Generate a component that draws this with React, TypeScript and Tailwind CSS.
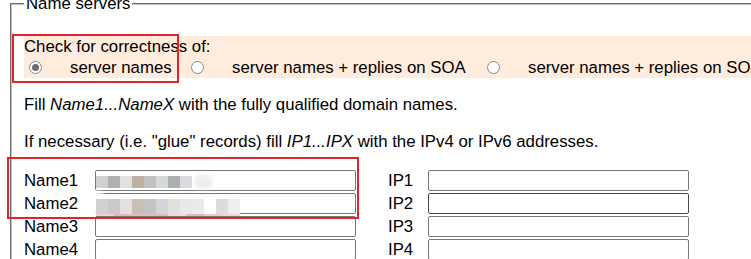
import React from "react";

const row1 = ["#d3d1cf", "#b2afb4", "#e2e1df", "#bcb1a3", "#c2c1bf", "#d6d9da", "#a9b1ae", "#dddbe0"];
const row2 = ["#d3d1cf", "#cfc9c6", "#e1e1e1", "#c9c0b3", "#c1c3c4", "#cfd7dc", "#e0e1dc", "#e8e8e8", "#ebebeb", "#ffffff", "#dcdcdc", "#eeeeee"];
const pink = ["#f0d0d0", "#e8b5b8", "#eab9bb", "#e9b7ba", "#f5d9da", "#e3b9bb", "#eecacc", "#f3d3d4"];

const Radio = ({ checked }: { checked?: boolean }) => (
  <span className="inline-flex h-[13px] w-[13px] shrink-0 items-center justify-center rounded-full border border-[#8a8a8a] bg-white">
    {checked && <span className="h-[7px] w-[7px] rounded-full bg-[#6f6f6f]" />}
  </span>
);

const Mosaic = ({ colors, size }: { colors: string[]; size: number }) => (
  <div className="absolute left-0 top-[5px] flex">
    {colors.map((c, i) => (
      <span key={i} style={{ backgroundColor: c, width: 12, height: size }} />
    ))}
  </div>
);

const Row = ({ n, dark, blur }: { n: number; dark?: boolean; blur?: React.ReactNode }) => (
  <div className="flex h-[21px] items-center">
    <span className="w-[71px]">Name{n}</span>
    <div className="relative h-[21px] w-[261px] rounded-[2px] border border-[#767676] bg-white">{blur}</div>
    <span className="ml-[32px] w-[40px]">IP{n}</span>
    <div
      className={
        dark
          ? "h-[21px] w-[261px] rounded-[2px] border border-[#4a4a4a] bg-white"
          : "h-[21px] w-[261px] rounded-[2px] border border-[#767676] bg-white"
      }
    />
  </div>
);

export default function App() {
  return (
    <div className="relative h-[259px] w-[751px] overflow-hidden bg-white font-['Liberation_Sans',sans-serif] text-[16.8px] text-black">
      <fieldset className="-mt-[7px] ml-[10px] w-[800px] border-2 border-[#c0c0c0] px-[12px] pb-4 [border-style:groove]">
        <legend className="px-[2px] leading-[21px]">Name servers</legend>

        <div className="mt-[22px] bg-[#ffecdc] leading-[21px]">
          <div>Check for correctness of:</div>
          <div className="flex h-[21px] items-center">
            <span className="flex w-[167px] items-center pl-[5px]">
              <Radio checked />
              <span className="ml-[28px]">server names</span>
            </span>
            <span className="flex w-[296px] items-center">
              <Radio />
              <span className="ml-[28px]">server names + replies on SOA</span>
            </span>
            <span className="flex items-center whitespace-nowrap">
              <Radio />
              <span className="ml-[28px]">server names + replies on SOA and NS</span>
            </span>
          </div>
        </div>

        <p className="mt-[16px] leading-[21px]">
          Fill <i>Name1...NameX</i> with the fully qualified domain names.
        </p>
        <p className="mt-[16px] leading-[21px]">
          If necessary (i.e. "glue" records) fill <i>IP1...IPX</i> with the IPv4 or IPv6 addresses.
        </p>

        <div className="mt-[18px] flex flex-col gap-[2px]">
          <Row
            n={1}
            blur={
              <>
                <Mosaic colors={row1} size={12} />
                <span className="absolute left-[98px] top-[4px] h-[14px] w-[18px] rounded-full bg-[#ececec] blur-[2px]" />
              </>
            }
          />
          <Row
            n={2}
            dark
            blur={
              <>
                <span className="absolute -left-[8px] -top-[3px] h-[24px] w-[18px] rounded-full bg-white blur-[2px]" />
                <Mosaic colors={row2} size={15} />
                <div className="absolute left-0 top-[20px] flex">
                  {pink.map((c, i) => (
                    <span key={i} style={{ backgroundColor: c, width: 18, height: 5 }} />
                  ))}
                </div>
              </>
            }
          />
          <Row n={3} />
          <Row n={4} />
        </div>
      </fieldset>

      <div className="absolute left-[12px] top-[34px] h-[49px] w-[167px] border-2 border-[#e3222c]" />
      <div className="absolute left-[7px] top-[157px] h-[62px] w-[352px] border-2 border-[#e3222c]" />
    </div>
  );
}
